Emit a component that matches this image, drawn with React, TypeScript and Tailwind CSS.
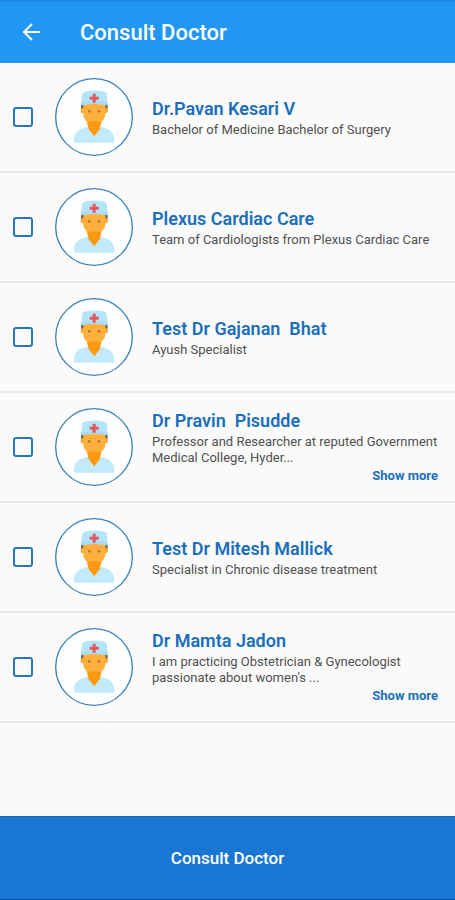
import { useState } from "react";

type Doctor = {
  id: number;
  name: string;
  about: string;
  truncated?: boolean;
};

const doctors: Doctor[] = [
  { id: 1, name: "Dr.Pavan Kesari V", about: "Bachelor of Medicine Bachelor of Surgery" },
  { id: 2, name: "Plexus Cardiac Care", about: "Team of Cardiologists from Plexus Cardiac Care" },
  { id: 3, name: "Test Dr Gajanan  Bhat", about: "Ayush Specialist" },
  {
    id: 4,
    name: "Dr Pravin  Pisudde",
    about: "Professor and Researcher at reputed Government Medical College, Hyder...",
    truncated: true,
  },
  { id: 5, name: "Test Dr Mitesh Mallick", about: "Specialist in Chronic disease treatment" },
  {
    id: 6,
    name: "Dr Mamta Jadon",
    about: "I am practicing Obstetrician & Gynecologist passionate about women's ...",
    truncated: true,
  },
];

function DoctorAvatar() {
  return (
    <svg viewBox="30 24 234 234" className="size-[78px] shrink-0" aria-hidden="true">
      <circle cx="147" cy="141" r="115" fill="#fdfeff" stroke="#3f82b8" strokeWidth="4" />
      {/* coat */}
      <path d="M87 218v-8c0-20 12-33 31-37l15-5h29l15 5c19 4 31 17 31 37v8z" fill="#c3eafb" />
      {/* hair and ears */}
      <path d="M108 104h80v14h-80z" fill="#6b655c" />
      <circle cx="115" cy="122" r="8" fill="#ffab33" />
      <circle cx="181" cy="122" r="8" fill="#ffab33" />
      {/* face */}
      <path d="M115 100h66v31c0 8-3 15-8 20l-10 14h-31l-10-14c-5-5-7-12-7-20z" fill="#ffb03c" />
      <circle cx="133" cy="124" r="4" fill="#b07a35" />
      <circle cx="162" cy="124" r="4" fill="#b07a35" />
      {/* neck */}
      <path d="M126 157c14-4 29-4 43 0l-5 21-16 21-17-21z" fill="#fb9a10" />
      {/* cap */}
      <path d="M111 77c0-9 5-12 13-13 17-3 32-3 49 0 8 1 13 4 13 13l2 28c-27-4-53-4-80 0z" fill="#b5e4f9" />
      <path d="M108 97c27-4 53-4 80 0v9c-27-5-53-5-80 0z" fill="#a8dcf4" />
      <path d="M143 71h9v9h9v9h-9v9h-9v-9h-9v-9h9z" fill="#e2575c" />
    </svg>
  );
}

function DoctorRow({
  doctor,
  checked,
  onToggle,
}: {
  doctor: Doctor;
  checked: boolean;
  onToggle: () => void;
}) {
  const inputId = `doctor-${doctor.id}`;

  return (
    <li className="flex min-h-[110px] items-center border-b-2 border-[#e9e9e9] pl-[13px]">
      <input
        id={inputId}
        type="checkbox"
        checked={checked}
        onChange={onToggle}
        className="size-5 shrink-0 appearance-none rounded-[3px] border-2 border-[#2a76bd] checked:bg-[#2a76bd]"
      />
      <div className="ml-[22px]">
        <DoctorAvatar />
      </div>
      <div className="ml-[19px] min-w-0 flex-1">
        <label htmlFor={inputId} className="block text-lg/[26px] font-semibold whitespace-pre text-[#1a6fba]">
          {doctor.name}
        </label>
        <p className="text-[13px]/4 text-[#505050]">{doctor.about}</p>
        {doctor.truncated ? (
          <div className="flex justify-end pr-[17px]">
            <button type="button" className="text-[13px]/5 font-bold text-[#1a6fba]">
              Show more
            </button>
          </div>
        ) : null}
      </div>
    </li>
  );
}

export default function App() {
  const [selected, setSelected] = useState<number[]>([]);

  const toggle = (id: number) =>
    setSelected((ids) => (ids.includes(id) ? ids.filter((item) => item !== id) : [...ids, id]));

  return (
    <div className="flex min-h-screen flex-col bg-[#fafafa] font-['Roboto',sans-serif]">
      <header className="flex h-[63px] items-center border-t-2 border-[#1e88e5] bg-[#2196f3] pl-[22px] text-white">
        <button type="button" aria-label="Back" className="size-5">
          <svg viewBox="0 0 20 20" className="size-5" fill="none" stroke="currentColor" strokeWidth="2">
            <path d="m10 1-8 8 8 8M2 9h16" />
          </svg>
        </button>
        <h1 className="ml-[38px] text-[22px]/7 font-medium">Consult Doctor</h1>
      </header>

      <ul>
        {doctors.map((doctor) => (
          <DoctorRow
            key={doctor.id}
            doctor={doctor}
            checked={selected.includes(doctor.id)}
            onToggle={() => toggle(doctor.id)}
          />
        ))}
      </ul>

      <button
        type="button"
        className="mt-auto h-[84px] w-full border-y border-t-[#1565b5] border-b-[#0d4f9c] bg-[#1976d2] text-[17px]/6 font-medium text-white"
      >
        Consult Doctor
      </button>
    </div>
  );
}
